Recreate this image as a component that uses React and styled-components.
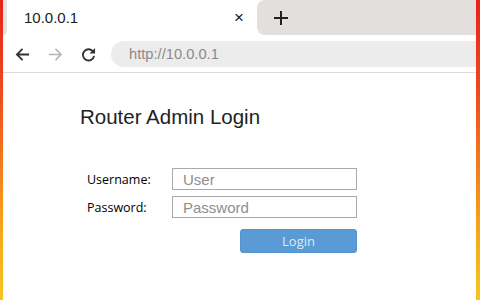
import React from 'react'
import styled, { createGlobalStyle } from 'styled-components'

const GlobalStyle = createGlobalStyle`
  html, body {
    margin: 0;
    padding: 0;
    background: #fff;
  }
  body {
    font-family: "Liberation Sans", Arial, sans-serif;
  }
`

const Frame = styled.div`
  width: 480px;
  height: 300px;
  box-sizing: border-box;
  padding: 0 4px 0 3px;
  background: linear-gradient(180deg, #e8231c 0%, #ee4a1c 30%, #f2711c 50%, #f5a41c 75%, #f7c51f 100%);
`

const Window = styled.div`
  height: 100%;
  background: #fff;
  display: flex;
  flex-direction: column;
  overflow: hidden;
`

const TabStrip = styled.div`
  height: 35px;
  display: flex;
  background: #fff;
`

const StripEdge = styled.div`
  width: 4px;
  background: #e6e2df;
  border-bottom-right-radius: 4px;
`

const Tab = styled.div`
  width: 250px;
  display: flex;
  align-items: center;
  justify-content: space-between;
  box-sizing: border-box;
  padding: 0 13px 0 17px;
  background: #fff;
  border-radius: 8px 8px 0 0;
  font-size: 15px;
  color: #222;
`

const CloseMark = styled.span`
  font-size: 17px;
  color: #222;
  line-height: 1;
`

const StripRest = styled.div`
  flex: 1;
  display: flex;
  align-items: center;
  padding-left: 17px;
  background: #e3dfdc;
  border-radius: 8px 0 0 8px;
`

const Toolbar = styled.div`
  height: 36px;
  display: flex;
  align-items: center;
  padding: 1px 0 0 12px;
  border-bottom: 1px solid #dcdcdc;
`

const NavButton = styled.div`
  width: 33px;
  flex: none;
  display: flex;
  align-items: center;
  color: ${p => (p.$disabled ? '#b4b4b4' : '#333')};
`

const Omnibox = styled.div`
  flex: 1;
  height: 26px;
  margin-left: -3px;
  display: flex;
  align-items: center;
  padding-left: 18px;
  background: #ececec;
  border-radius: 13px 0 0 13px;
  font-size: 14.7px;
  color: #8a8a8a;
`

const Content = styled.div`
  flex: 1;
  padding: 32px 0 0 77px;
`

const Title = styled.h1`
  margin: 0;
  font-family: "Liberation Sans", Arial, sans-serif;
  font-weight: normal;
  font-size: 20.5px;
  line-height: 23px;
  color: #222;
`

const Form = styled.div`
  margin: 40px 0 0 7px;
  display: grid;
  grid-template-columns: 85px 185px;
  row-gap: 6px;
  align-items: center;
`

const Label = styled.label`
  font-family: "Open Sans", "Noto Sans", sans-serif;
  font-size: 12.5px;
  color: #000;
`

const Input = styled.input`
  height: 22px;
  box-sizing: border-box;
  border: 1px solid #a9a9a9;
  padding: 0 10px;
  font-family: "Liberation Sans", Arial, sans-serif;
  font-size: 15px;
  outline: none;
  &::placeholder {
    color: #8e8e8e;
  }
`

const LoginButton = styled.button`
  grid-column: 2;
  justify-self: end;
  width: 117px;
  height: 24px;
  margin-top: 5px;
  border: 1px solid #5494cf;
  border-radius: 3px;
  background: #5b9bd5;
  color: #dce9f6;
  font-family: "Open Sans", "Noto Sans", sans-serif;
  font-size: 13px;
  padding: 0;
`

const BackIcon = () => (
  <svg width="15" height="15" viewBox="0 0 16 16" fill="none" stroke="currentColor" strokeWidth="1.9">
    <path d="M15 8H2M8 2L2 8l6 6" />
  </svg>
)

const ForwardIcon = () => (
  <svg width="15" height="15" viewBox="0 0 16 16" fill="none" stroke="currentColor" strokeWidth="1.6">
    <path d="M1 8h13M8 2l6 6-6 6" />
  </svg>
)

const ReloadIcon = () => (
  <svg width="15" height="15" viewBox="0 0 16 16">
    <path d="M13.2 5.2A6 6 0 1 0 14 9.5" fill="none" stroke="currentColor" strokeWidth="2" />
    <path d="M15 1v6H9z" fill="currentColor" />
  </svg>
)

const PlusIcon = () => (
  <svg width="14" height="14" viewBox="0 0 14 14" stroke="#222" strokeWidth="2">
    <path d="M7 0v14M0 7h14" />
  </svg>
)

const App = () => {
  return (
    <>
      <GlobalStyle />
      <Frame>
        <Window>
          <TabStrip>
            <StripEdge />
            <Tab>
              <span>10.0.0.1</span>
              <CloseMark>×</CloseMark>
            </Tab>
            <StripRest>
              <PlusIcon />
            </StripRest>
          </TabStrip>

          <Toolbar>
            <NavButton><BackIcon /></NavButton>
            <NavButton $disabled><ForwardIcon /></NavButton>
            <NavButton><ReloadIcon /></NavButton>
            <Omnibox>http://10.0.0.1</Omnibox>
          </Toolbar>

          <Content>
            <Title>Router Admin Login</Title>
            <Form>
              <Label>Username:</Label>
              <Input placeholder="User" />
              <Label>Password:</Label>
              <Input placeholder="Password" type="password" />
              <LoginButton>Login</LoginButton>
            </Form>
          </Content>
        </Window>
      </Frame>
    </>
  )
}

export default App
